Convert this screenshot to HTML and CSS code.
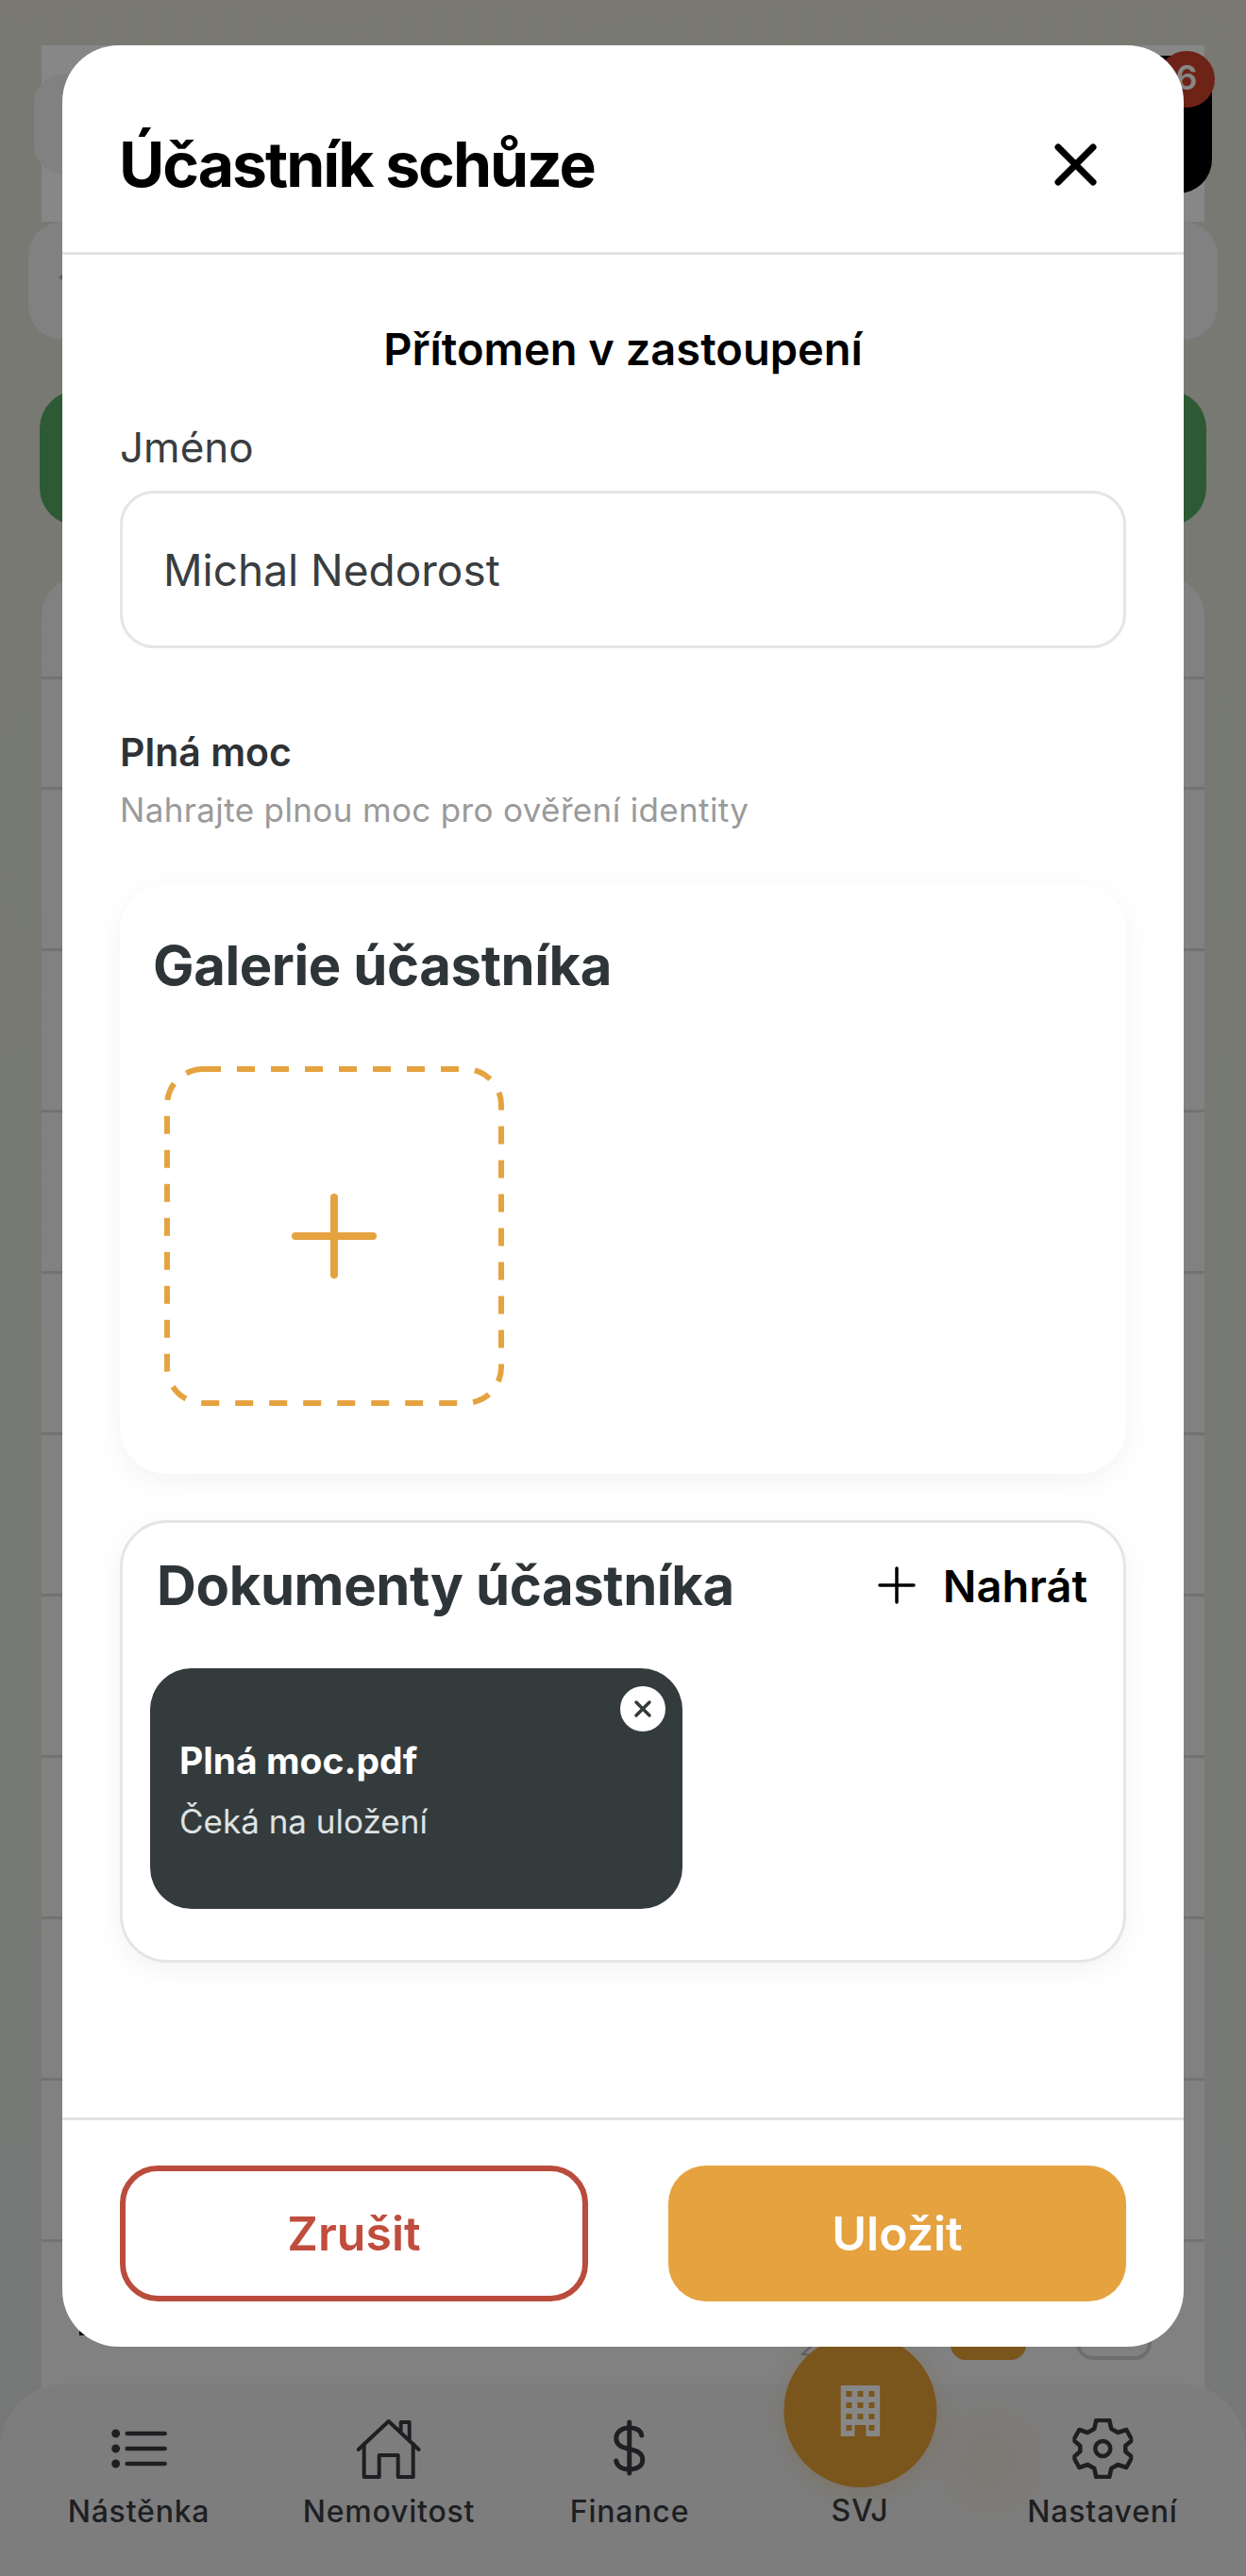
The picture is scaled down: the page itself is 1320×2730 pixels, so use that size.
FILE: index.html
```html
<!DOCTYPE html>
<html lang="cs">

<head>
    <meta charset="utf-8">
    <title>Účastník schůze</title>
    <link rel="stylesheet" href="styles.css">
</head>

<body>
    <div class="app">
        <div class="top-block">
            <div class="search-pill"></div>
            <div class="bell-button"><span class="badge">6</span></div>
        </div>
        <div class="filter-pill">
            <svg class="chevron" width="24" height="24" viewBox="0 0 24 24"><path d="M2 12 14 2v20z" fill="#b4b4b4"/></svg>
        </div>
        <div class="green-button"></div>
        <div class="table">
            <div class="table-head"></div>
            <div class="table-row short"></div>
            <div class="table-row"></div>
            <div class="table-row"></div>
            <div class="table-row"></div>
            <div class="table-row"></div>
            <div class="table-row"></div>
            <div class="table-row"></div>
            <div class="table-row"></div>
            <div class="table-row"></div>
            <div class="table-row"></div>
            <div class="table-row last">
                <svg class="row-mark" width="10" height="5" viewBox="0 0 10 5"><path d="M0 0l10 5H0z" fill="#000"/></svg>
                <svg class="row-pencil" width="14" height="14" viewBox="0 0 14 14" fill="none" stroke="#b0b0b0" stroke-width="2"><path d="M13 1 2 11l11 1"/></svg>
                <span class="row-tab"></span>
                <span class="row-box"></span>
            </div>
        </div>

        <nav class="tabbar">
            <div class="tab">
                <svg width="64" height="64" viewBox="0 0 64 64" fill="none" stroke="currentColor" stroke-width="4.5" stroke-linecap="round">
                    <circle cx="8" cy="16" r="2.2" fill="currentColor"/>
                    <circle cx="8" cy="32" r="2.2" fill="currentColor"/>
                    <circle cx="8" cy="48" r="2.2" fill="currentColor"/>
                    <path d="M20 16h40M20 32h40M20 48h40"/>
                </svg>
                <span>Nástěnka</span>
            </div>
            <div class="tab">
                <svg width="68" height="64" viewBox="0 0 68 64" fill="none" stroke="currentColor" stroke-width="4" stroke-linecap="round" stroke-linejoin="round">
                    <path d="M2 33 34 3l32 30"/>
                    <path d="M8 27v35h16V39h20v23h16V27"/>
                    <path d="M47 13V4h9v19"/>
                </svg>
                <span>Nemovitost</span>
            </div>
            <div class="tab">
                <svg width="40" height="64" viewBox="0 0 40 64" fill="none" stroke="currentColor" stroke-width="5" stroke-linecap="round">
                    <path d="M20 4v54"/>
                    <path d="M33 18c-1-6-7-8-13-8-8 0-14 4-14 11 0 16 28 7 28 23 0 7-7 10-14 10-7 0-13-3-14-9"/>
                </svg>
                <span>Finance</span>
            </div>
            <div class="tab active">
                <div class="tab-circle">
                    <svg width="42" height="54" viewBox="0 0 42 54">
                        <path fill="#fff" fill-rule="evenodd" d="M0 0h42v54H27V42H15v12H0zM6 6v6h6V6zM18 6v6h6V6zM30 6v6h6V6zM6 18v6h6v-6zM18 18v6h6v-6zM30 18v6h6v-6zM6 30v6h6v-6zM18 30v6h6v-6zM30 30v6h6v-6zM6 42v6h6v-6zM30 42v6h6v-6z"/>
                    </svg>
                </div>
                <span>SVJ</span>
            </div>
            <div class="tab">
                <svg width="64" height="64" viewBox="0 0 64 64" fill="none" stroke="currentColor" stroke-width="4.5" stroke-linejoin="round">
                    <circle cx="32" cy="32" r="8"/>
                    <path d="M25 2h14l2 9 7 4 9-3 6 11-7 6v6l7 6-6 11-9-3-7 4-2 9H25l-2-9-7-4-9 3-6-11 7-6v-6l-7-6 6-11 9 3 7-4z"/>
                </svg>
                <span>Nastavení</span>
            </div>
        </nav>
        <div class="scrim"></div>

        <section class="modal">
            <header class="modal-head">
                <h1>Účastník schůze</h1>
                <svg class="modal-close" width="45" height="45" viewBox="0 0 45 45" fill="none" stroke="#000" stroke-width="7" stroke-linecap="round">
                    <path d="M4 4l37 37M41 4 4 41"/>
                </svg>
            </header>

            <div class="modal-body">
                <h2 class="status">Přítomen v zastoupení</h2>
                <label class="field-label" for="name">Jméno</label>
                <div class="text-input" id="name">Michal Nedorost</div>

                <h3 class="section-title">Plná moc</h3>
                <p class="section-hint">Nahrajte plnou moc pro ověření identity</p>

                <div class="gallery-card">
                    <h4 class="card-title">Galerie účastníka</h4>
                    <div class="add-photo">
                        <svg width="360" height="360" viewBox="0 0 360 360" fill="none" stroke="#e5a340">
                            <rect x="3" y="3" width="354" height="354" rx="38" stroke-width="6" stroke-dasharray="19 17"/>
                            <path d="M139 180h82M180 139v82" stroke-width="8" stroke-linecap="round"/>
                        </svg>
                    </div>
                </div>

                <div class="docs-card">
                    <div class="docs-head">
                        <h4 class="card-title">Dokumenty účastníka</h4>
                        <div class="upload">
                            <svg width="40" height="40" viewBox="0 0 40 40" stroke="#000" stroke-width="3.5" stroke-linecap="round"><path d="M2 20h36M20 2v36"/></svg>
                            <span>Nahrát</span>
                        </div>
                    </div>
                    <div class="file-tile">
                        <span class="file-remove">
                            <svg width="20" height="20" viewBox="0 0 20 20" stroke="#343b3c" stroke-width="3.5" stroke-linecap="round"><path d="M3 3l14 14M17 3 3 17"/></svg>
                        </span>
                        <div class="file-name">Plná moc.pdf</div>
                        <div class="file-state">Čeká na uložení</div>
                    </div>
                </div>
            </div>

            <footer class="modal-foot">
                <button class="btn btn-cancel">Zrušit</button>
                <button class="btn btn-save">Uložit</button>
            </footer>
        </section>
    </div>
</body>

</html>
```

FILE: styles.css
```css
* {
    box-sizing: border-box;
}

body {
    margin: 0;
    font-family: Inter, "Noto Sans", sans-serif;
    background-color: #e0e6d7;
}

.app {
    position: relative;
    width: 1320px;
    height: 2730px;
    overflow: hidden;
    background: linear-gradient(#e4e4d8, #e0e6d7 30%, #dfe3e2);
}

/* page behind the dialog */
.top-block {
    position: relative;
    height: 187px;
    margin: 48px 44px 0;
    background-color: #fff;
}

.search-pill {
    position: absolute;
    left: -8px;
    top: 31px;
    width: 1100px;
    height: 105px;
    border-radius: 30px;
    background-color: #f3f3f3;
}

.bell-button {
    position: absolute;
    top: 11px;
    right: -8px;
    width: 120px;
    height: 146px;
    border-radius: 36px;
    background-color: #000;
}

.badge {
    position: absolute;
    top: -5px;
    right: -3px;
    width: 60px;
    height: 60px;
    border-radius: 50%;
    background-color: #d0422d;
    color: #fff;
    font-size: 36px;
    font-weight: 600;
    line-height: 56px;
    text-align: center;
}

.filter-pill {
    display: flex;
    align-items: center;
    height: 125px;
    margin: 0 30px;
    padding-left: 30px;
    border-radius: 36px;
    background-color: #f3f3f3;
}

.chevron {
    margin-bottom: 8px;
}

.green-button {
    height: 143px;
    margin: 54px 42px 0;
    border-radius: 40px;
    background-color: #55aa62;
}

.table {
    margin: 55px 44px 0;
    border-radius: 40px 40px 0 0;
    overflow: hidden;
    background-color: #f3f3f3;
}

.table-head {
    height: 108px;
    border-bottom: 3px solid #d8d8d8;
}

.table-row {
    position: relative;
    height: 171px;
    border-bottom: 3px solid #d8d8d8;
}

.table-row.short {
    height: 117px;
}

.table-row.last {
    height: 160px;
    border-bottom: 0;
}

.row-mark {
    position: absolute;
    left: 40px;
    top: 94px;
}

.row-pencil {
    position: absolute;
    left: 804px;
    top: 108px;
}

.row-tab {
    position: absolute;
    left: 963px;
    top: 57px;
    width: 80px;
    height: 68px;
    border-radius: 16px;
    background-color: #e6a035;
}

.row-box {
    position: absolute;
    left: 1096px;
    top: 57px;
    width: 80px;
    height: 68px;
    border: 4px solid #d0d0d0;
    border-radius: 18px;
}

.tabbar {
    position: absolute;
    left: 0;
    right: 0;
    bottom: 0;
    height: 204px;
    border-radius: 70px 70px 0 0;
    background: radial-gradient(circle 80px at 1048px 82px, rgba(230, 160, 53, 0.12), transparent), #ecedee;
}

.tab {
    position: absolute;
    top: 37px;
    display: flex;
    flex-direction: column;
    align-items: center;
    gap: 17px;
    transform: translateX(-50%);
    color: #393c40;
    font-size: 32px;
    font-weight: 500;
    letter-spacing: 0.8px;
    line-height: 36px;
}

.tab:nth-child(1) {
    left: 147px;
}

.tab:nth-child(2) {
    left: 412px;
}

.tab:nth-child(3) {
    left: 667px;
}

.tab:nth-child(4) {
    left: 911px;
}

.tab:nth-child(5) {
    left: 1168px;
}

.tab.active {
    top: 119px;
}

.tab-circle {
    position: absolute;
    top: -171px;
    left: 50%;
    display: flex;
    align-items: center;
    justify-content: center;
    width: 162px;
    height: 162px;
    margin-left: -81px;
    border-radius: 50%;
    background-color: #e6a035;
    box-shadow: 0 6px 24px rgba(230, 160, 53, 0.25);
}

.tab.active span {
    margin-top: -2px;
}

.scrim {
    position: absolute;
    inset: 0;
    background-color: rgba(0, 0, 0, 0.47);
}

/* dialog */
.modal {
    position: absolute;
    left: 66px;
    top: 48px;
    display: flex;
    flex-direction: column;
    width: 1188px;
    height: 2439px;
    border-radius: 60px;
    overflow: hidden;
    background-color: #fff;
}

.modal-head {
    display: flex;
    align-items: center;
    justify-content: space-between;
    flex-shrink: 0;
    height: 222px;
    padding: 33px 92px 0 60px;
    border-bottom: 3px solid #e3e3e5;
}

.modal-head h1 {
    margin: 0;
    color: #000;
    font-size: 66px;
    font-weight: 700;
    letter-spacing: -2px;
}

.modal-body {
    flex: 1;
    padding: 0 61px;
}

.status {
    margin: 72px 0 0;
    color: #000;
    font-size: 47px;
    font-weight: 600;
    line-height: 56px;
    text-align: center;
}

.field-label {
    display: block;
    margin-top: 51px;
    color: #3a3d40;
    font-size: 44px;
    line-height: 50px;
}

.text-input {
    display: flex;
    align-items: center;
    height: 167px;
    margin-top: 21px;
    padding-left: 43px;
    border: 3px solid #e5e5e7;
    border-radius: 36px;
    color: #3a3d40;
    font-size: 46px;
}

.section-title {
    margin: 86px 0 0;
    color: #2e3235;
    font-size: 41px;
    font-weight: 600;
    line-height: 48px;
}

.section-hint {
    margin: 14px 0 0;
    color: #9a9a9a;
    font-size: 35px;
    letter-spacing: 0.36px;
    line-height: 46px;
}

.gallery-card {
    height: 625px;
    margin-top: 56px;
    padding: 50px 35px 0;
    border-radius: 50px;
    background-color: #fff;
    box-shadow: 0 8px 30px rgba(0, 0, 0, 0.05);
}

.card-title {
    margin: 0;
    color: #2e3538;
    font-size: 58px;
    font-weight: 700;
    letter-spacing: -0.4px;
    line-height: 72px;
}

.add-photo {
    margin: 71px 0 0 12px;
    line-height: 0;
}

.docs-card {
    height: 469px;
    margin-top: 49px;
    padding: 30px 38px 0 29px;
    border: 3px solid #e5e5e7;
    border-radius: 50px;
    background-color: #fff;
    box-shadow: 0 8px 30px rgba(0, 0, 0, 0.05);
}

.docs-head {
    display: flex;
    align-items: center;
    justify-content: space-between;
    padding-left: 7px;
}

.upload {
    display: flex;
    align-items: center;
    gap: 29px;
    color: #000;
    font-size: 47px;
    font-weight: 600;
}

.file-tile {
    position: relative;
    display: flex;
    flex-direction: column;
    justify-content: center;
    gap: 19px;
    width: 564px;
    height: 255px;
    margin-top: 52px;
    padding: 4px 0 0 31px;
    border-radius: 44px;
    background-color: #343b3c;
}

.file-remove {
    position: absolute;
    top: 19px;
    right: 18px;
    display: flex;
    align-items: center;
    justify-content: center;
    width: 48px;
    height: 48px;
    border-radius: 50%;
    background-color: #fff;
}

.file-name {
    color: #fff;
    font-size: 39px;
    font-weight: 700;
    line-height: 46px;
}

.file-state {
    color: #dfe2e2;
    font-size: 35px;
    line-height: 44px;
}

.modal-foot {
    display: flex;
    justify-content: space-between;
    flex-shrink: 0;
    height: 243px;
    padding: 48px 61px 0;
    border-top: 3px solid #e3e3e5;
}

.btn {
    height: 144px;
    border-radius: 40px;
    font-family: inherit;
    font-size: 50px;
    font-weight: 600;
}

.btn-cancel {
    width: 496px;
    border: 6px solid #b94c3c;
    background-color: #fff;
    color: #c04d3d;
}

.btn-save {
    width: 485px;
    border: 0;
    background-color: #e5a23f;
    color: #fff;
}
```
